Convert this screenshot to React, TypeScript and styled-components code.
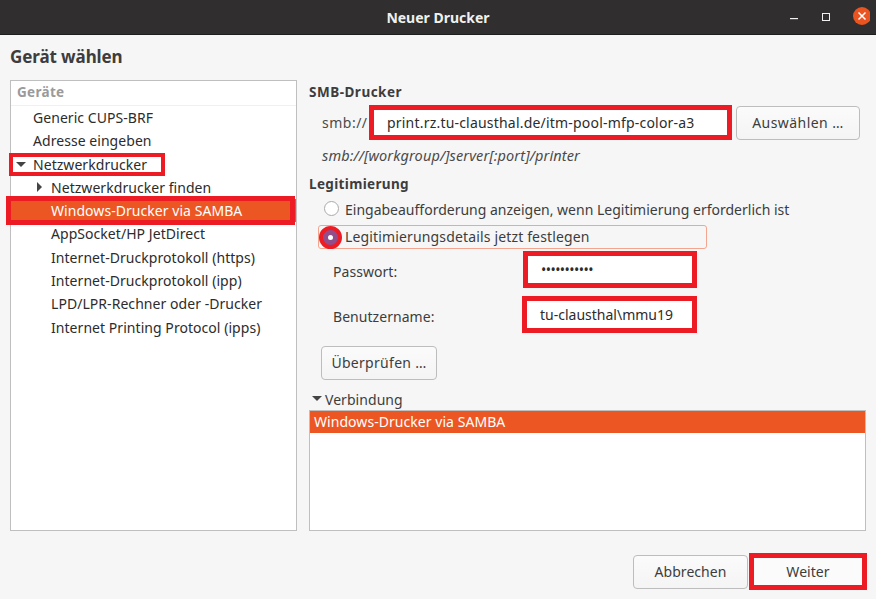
import React from "react";
import styled, { createGlobalStyle } from "styled-components";

const Global = createGlobalStyle`
  html, body { margin: 0; padding: 0; height: 100%; background: #f6f6f6; }
  #root { height: 100%; }
  * { box-sizing: border-box; }
`;
const red = "#ed1c24";
const Win = styled.div`
  width: 876px; height: 599px; overflow: hidden; display: flex; flex-direction: column;
  background: #f6f6f6; color: #3d3d3d;
  font-family: "Noto Sans", "Open Sans", sans-serif; font-size: 14px; letter-spacing: 0.05px;
`;
const TitleBar = styled.header`
  height: 35px; flex: none; position: relative; background: #302e2e;
  border-bottom: 1px solid #1f1e1e; display: flex; align-items: center; justify-content: center;
  color: #f2f0ee; font-weight: 700; font-size: 14px; letter-spacing: 0;
`;
const WinControls = styled.div`
  position: absolute; right: 6px; top: 6px; display: flex; align-items: center; gap: 0;
`;
const Heading = styled.h1`
  margin: 0; height: 45px; padding: 9px 0 0 10px; font-size: 17px; line-height: 26px; font-weight: 700; color: #3d3d3d; letter-spacing: -0.1px;
`;
const Columns = styled.div`
  display: grid; grid-template-columns: 287px 557px; gap: 12px; margin-left: 10px; height: 451px;
`;
const Tree = styled.div`
  background: #fff; border: 1px solid #bfbfbf; position: relative;
`;
const TreeHead = styled.div`
  height: 25px; line-height: 22px; padding-left: 6px; color: #9a9a9a; font-weight: 700; border-bottom: 1px solid #f0f0f0; font-size: 13.5px; letter-spacing: 0.3px;
`;
const TreeRow = styled.div<{ $indent: number; $sel?: boolean }>`
  height: 23.3px; line-height: 23px; padding-left: ${(p) => p.$indent}px; position: relative; white-space: nowrap;
  color: ${(p) => (p.$sel ? "#fff" : "#2c2c2c")};
  ${(p) => p.$sel && `background: #ec5622;`}
`;
const Arrow = styled.span<{ $dir: "down" | "right"; $left: number; $top: number }>`
  position: absolute; left: ${(p) => p.$left}px; top: ${(p) => p.$top}px; width: 0; height: 0;
  ${(p) => p.$dir === "down"
    ? `border-left: 5px solid transparent; border-right: 5px solid transparent; border-top: 5px solid #444;`
    : `border-top: 5px solid transparent; border-bottom: 5px solid transparent; border-left: 5px solid #444;`}
`;
const Mark = styled.div<{ $l: number; $t: number; $w: number; $h: number; $b: number }>`
  position: absolute; left: ${(p) => p.$l}px; top: ${(p) => p.$t}px; width: ${(p) => p.$w}px; height: ${(p) => p.$h}px;
  border: ${(p) => p.$b}px solid ${red}; pointer-events: none;
`;
const Right = styled.div`
  display: flex; flex-direction: column; min-width: 0;
`;
const Section = styled.div`
  height: 24px; line-height: 24px; font-weight: 700; color: #3d3d3d; font-size: 13.5px; letter-spacing: 0.5px;
`;
const UrlRow = styled.div`
  display: flex; margin-top: 1px; height: 35px; padding-left: 13px; align-items: flex-start;
`;
const Prefix = styled.span`
  width: 47px; line-height: 35px; color: #4a4a4a; letter-spacing: 0.5px;
`;
const Field = styled.div<{ $w: number; $h: number; $ls?: number }>`
  width: ${(p) => p.$w}px; height: ${(p) => p.$h}px; flex: none; background: #fff; border: 5px solid ${red};
  padding-left: 13px; color: #2c2c2c; display: flex; align-items: center; white-space: nowrap;
  letter-spacing: ${(p) => p.$ls ?? 0}px;
`;
const Btn = styled.div<{ $w: number; $h?: number }>`
  width: ${(p) => p.$w}px; height: ${(p) => p.$h ?? 34}px; flex: none; border: 1px solid #bdbdbd; border-radius: 4px;
  background: linear-gradient(#fbfbfb, #f4f4f4); display: flex; align-items: center; justify-content: center; color: #3d3d3d;
`;
const PickBtn = styled(Btn)`
  margin: 1px 0 0 4px; letter-spacing: 0.45px; padding-bottom: 2px;
`;
const Hint = styled.div`
  height: 24px; margin-top: 3px; line-height: 24px; padding-left: 13px; font-style: italic; color: #4a4a4a; font-size: 14.5px; letter-spacing: 0.12px;
`;
const SectionSpaced = styled(Section)`
  margin-top: 5px; letter-spacing: 0.35px;
`;
const RadioRow = styled.div<{ $focus?: boolean }>`
  height: 24px; display: flex; align-items: center; position: relative; margin-left: 9px; width: 389px; white-space: nowrap;
  padding-left: 26px; color: #3d3d3d; border-radius: 3px; margin-top: ${(p) => (p.$focus ? 4 : 1)}px;
  border: 1px solid ${(p) => (p.$focus ? "#f4a58f" : "transparent")};
  padding-bottom: ${(p) => (p.$focus ? 2 : 0)}px;
  letter-spacing: ${(p) => (p.$focus ? 0.15 : 0)}px;
`;
const RadioOff = styled.span`
  position: absolute; left: 5px; top: 3px; width: 15px; height: 15px; border-radius: 50%; border: 1px solid #aaa; background: #fff;
`;
const RadioOn = styled.span`
  position: absolute; left: 0px; top: 0px; width: 23px; height: 23px; border-radius: 50%; border: 4px solid ${red}; background: #924d8b;
  display: flex; align-items: center; justify-content: center;
  &::after { content: ""; width: 5px; height: 5px; border-radius: 50%; background: #fff; }
`;
const FormRow = styled.div<{ $top: number; $fx: number }>`
  display: flex; align-items: center; margin-top: ${(p) => p.$top}px; padding-left: 24px;
  & > span { width: ${(p) => p.$fx}px; color: #3d3d3d; letter-spacing: 0.05px; padding-top: 3px; }
`;
const VerifyBtn = styled(Btn)`
  margin: 13px 0 0 12px; letter-spacing: 0.3px; padding-bottom: 2px;
`;
const Expander = styled.div`
  height: 21px; margin-top: 9px; line-height: 22px; padding-left: 16px; position: relative; color: #3d3d3d;
`;
const ConnList = styled.div`
  flex: 1; background: #fff; border: 1px solid #bfbfbf;
`;
const ConnRow = styled.div`
  height: 22px; line-height: 22px; padding-left: 4px; background: #ec5622; color: #fff;
`;
const Footer = styled.div`
  display: flex; justify-content: flex-end; align-items: center; margin-top: 22px; padding-right: 9px;
`;
const WeiterBtn = styled.div`
  width: 118px; height: 37px; margin-left: 1px; border: 5px solid ${red}; background: #fbfbfb; display: flex; align-items: center; justify-content: center; color: #3d3d3d;
`;

const rows: { t: string; i: number; sel?: boolean }[] = [
  { t: "Generic CUPS-BRF", i: 22 },
  { t: "Adresse eingeben", i: 22 },
  { t: "Netzwerkdrucker", i: 22 },
  { t: "Netzwerkdrucker finden", i: 40 },
  { t: "Windows-Drucker via SAMBA", i: 40, sel: true },
  { t: "AppSocket/HP JetDirect", i: 40 },
  { t: "Internet-Druckprotokoll (https)", i: 40 },
  { t: "Internet-Druckprotokoll (ipp)", i: 40 },
  { t: "LPD/LPR-Rechner oder -Drucker", i: 40 },
  { t: "Internet Printing Protocol (ipps)", i: 40 },
];

export default function App() {
  return (
    <Win>
      <Global />
      <TitleBar>
        Neuer Drucker
        <WinControls>
          <svg width="84" height="22" viewBox="0 0 84 22">
            <rect x="4" y="12" width="8" height="1.2" fill="#f2f0ee" />
            <rect x="36.5" y="7.5" width="7" height="7" fill="none" stroke="#f2f0ee" />
            <circle cx="76" cy="10" r="9" fill="#e95420" />
            <path d="M72.5 6.5l7 7M79.5 6.5l-7 7" stroke="#fff" strokeWidth="1.5" />
          </svg>
        </WinControls>
      </TitleBar>
      <Heading>Gerät wählen</Heading>
      <Columns>
        <Tree>
          <TreeHead>Geräte</TreeHead>
          {rows.map((r) => (
            <TreeRow key={r.t} $indent={r.i} $sel={r.sel}>
              {r.t === "Netzwerkdrucker" && <Arrow $dir="down" $left={5} $top={9} />}
              {r.t === "Netzwerkdrucker finden" && <Arrow $dir="right" $left={26} $top={6} />}
              {r.t}
            </TreeRow>
          ))}
          <Mark $l={-2} $t={72} $w={156} $h={23} $b={4} />
          <Mark $l={-5} $t={115} $w={289} $h={29} $b={5} />
        </Tree>
        <Right>
          <Section>SMB-Drucker</Section>
          <UrlRow>
            <Prefix>smb://</Prefix>
            <Field $w={363} $h={35} $ls={0.2}>print.rz.tu-clausthal.de/itm-pool-mfp-color-a3</Field>
            <PickBtn $w={124}>Auswählen …</PickBtn>
          </UrlRow>
          <Hint>smb://[workgroup/]server[:port]/printer</Hint>
          <SectionSpaced>Legitimierung</SectionSpaced>
          <RadioRow><RadioOff />Eingabeaufforderung anzeigen, wenn Legitimierung erforderlich ist</RadioRow>
          <RadioRow $focus><RadioOn />Legitimierungsdetails jetzt festlegen</RadioRow>
          <FormRow $top={2} $fx={190}>
            <span>Passwort:</span>
            <Field $w={174} $h={37} $ls={-0.55}>•••••••••••</Field>
          </FormRow>
          <FormRow $top={8} $fx={189}>
            <span>Benutzername:</span>
            <Field $w={175} $h={37}>tu-clausthal\mmu19</Field>
          </FormRow>
          <VerifyBtn $w={116}>Überprüfen …</VerifyBtn>
          <Expander><Arrow $dir="down" $left={3} $top={7} />Verbindung</Expander>
          <ConnList><ConnRow>Windows-Drucker via SAMBA</ConnRow></ConnList>
        </Right>
      </Columns>
      <Footer>
        <Btn $w={115}>Abbrechen</Btn>
        <WeiterBtn>Weiter</WeiterBtn>
      </Footer>
    </Win>
  );
}
